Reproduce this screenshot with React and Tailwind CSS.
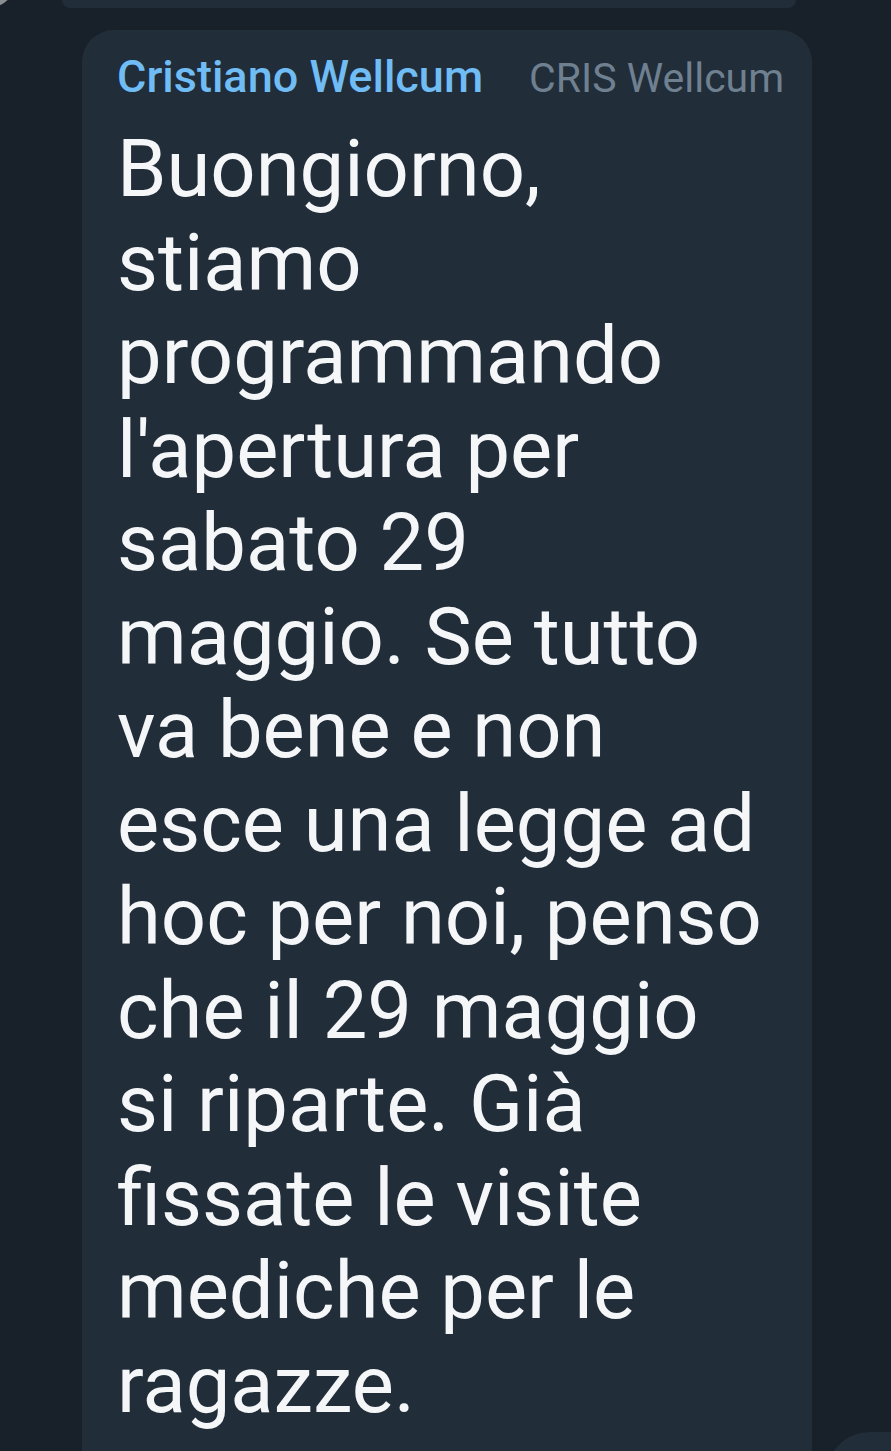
const lines = [
  "Buongiorno,",
  "stiamo",
  "programmando",
  "l'apertura per",
  "sabato 29",
  "maggio. Se tutto",
  "va bene e non",
  "esce una legge ad",
  "hoc per noi, penso",
  "che il 29 maggio",
  "si riparte. Già",
  "fissate le visite",
  "mediche per le",
  "ragazze.",
];

export default function App() {
  return (
    <div className="relative h-[1451px] w-[891px] overflow-hidden bg-[#18202a] font-['Roboto',sans-serif]">
      {/* avatar of previous message, cut off */}
      <div className="absolute -left-[40px] -top-[52px] h-[60px] w-[56px] rounded-full bg-[#8a8f94]" />

      {/* previous bubble, bottom edge only */}
      <div className="ml-[62px] h-[8px] w-[734px] rounded-b-[28px] bg-[#222d3a]" />

      <div className="mt-[22px] flex items-start">
        <div className="ml-[82px] w-[730px] shrink-0 rounded-t-[32px] bg-[#222d3a] pl-[35px] pt-[22px] pb-[200px]">
          <div className="flex h-[50px] items-baseline gap-[46px] leading-[50px]">
            <span className="text-[45px] font-medium text-[#70bcf4]">Cristiano Wellcum</span>
            <span className="text-[41px] text-[#6f8090]">CRIS Wellcum</span>
          </div>
          <div className="mt-[20px] text-[79.5px] leading-[93.5px] text-[#f4f6f8]">
            {lines.map((l, i) => (
              <div key={i} className="whitespace-nowrap">{l}</div>
            ))}
          </div>
        </div>
        <div className="ml-[14px] mt-[1402px] h-[120px] w-[200px] shrink-0 rounded-[44px] bg-[#222d3a]" />
      </div>
    </div>
  );
}
